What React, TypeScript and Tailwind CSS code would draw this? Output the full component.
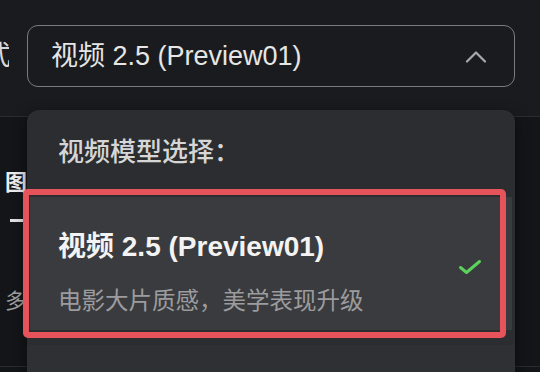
import React from 'react';

const App: React.FC = () => {
  return (
    <div className="relative w-[540px] h-[372px] overflow-hidden bg-[#141518] font-['Liberation_Sans','Noto_Sans_CJK_SC',sans-serif]">
      {/* Top row: label + select */}
      <div className="h-[117px] bg-[#1a1b1e] border-b border-[#2b2c2f] flex items-start pt-[25px]">
        <div className="w-[9px] h-[62px] overflow-hidden flex items-center justify-end">
          <span className="whitespace-nowrap text-[27px] text-[#d8d8d8] -mr-[2px]">式</span>
        </div>
        <div className="ml-[18px] w-[488px] h-[62px] rounded-[11px] border-[1.5px] border-[#7b7b7d] flex items-center justify-between pl-[23px] pr-[27px]">
          <span className="text-[27px] text-[#e6e6e6] leading-none">视频 2.5 (Preview01)</span>
          <svg width="22" height="13" viewBox="0 0 22 13" fill="none">
            <path d="M2 11.5 L11 2.5 L20 11.5" stroke="#a9a9ab" strokeWidth="2.2" strokeLinecap="round" strokeLinejoin="round" />
          </svg>
        </div>
      </div>

      {/* Content underneath the dropdown (only its left edge shows) */}
      <div className="w-[27px] h-[249px] overflow-hidden pl-[5px] pt-[50px] flex flex-col">
        <span className="text-[22px] font-bold text-[#ededed] leading-[32px]">图</span>
        <span className="ml-[5px] mt-[20px] w-[13px] h-[3px] bg-[#e0e0e0]"></span>
        <span className="mt-[64px] text-[21px] text-[#a0a0a0] leading-[30px]">多</span>
      </div>
      <div className="border-b border-[#2b2c2f]"></div>

      {/* Dropdown panel */}
      <div className="absolute left-[27px] top-[110px] w-[488px] h-[280px] rounded-t-[12px] bg-[#2c2d30] shadow-[0_4px_14px_rgba(0,0,0,0.5)]">
        <div className="pt-[24px] pl-[31px] h-[60px]">
          <span className="text-[26px] font-medium text-[#d6d6d6] leading-[36px]">视频模型选择：</span>
        </div>
        <div className="mt-[27px] mx-[3px] h-[133px] bg-[#3a3b3e] flex items-start justify-between pl-[28px] pr-[30px] pt-[33px]">
          <div className="flex flex-col">
            <span className="text-[28px] font-bold text-[#f3f3f3] leading-[34px]">视频 2.5 (Preview01)</span>
            <span className="mt-[22px] text-[23.5px] text-[#9c9c9e] leading-[30px]">电影大片质感，美学表现升级</span>
          </div>
          <svg width="24" height="16" viewBox="0 0 24 16" fill="none" className="mt-[29px]">
            <path d="M2.5 8.5 L8.5 13.5 L21.5 2.5" stroke="#5bd35b" strokeWidth="3" strokeLinecap="round" strokeLinejoin="round" />
          </svg>
        </div>
        <div className="mt-[15px] h-[60px] bg-[#2f3033]"></div>

        {/* Annotation highlight */}
        <div className="absolute left-[-4px] top-[79px] w-[483px] h-[149px] rounded-[5px] border-[6px] border-[#e6535a]"></div>
      </div>
    </div>
  );
};

export default App;
